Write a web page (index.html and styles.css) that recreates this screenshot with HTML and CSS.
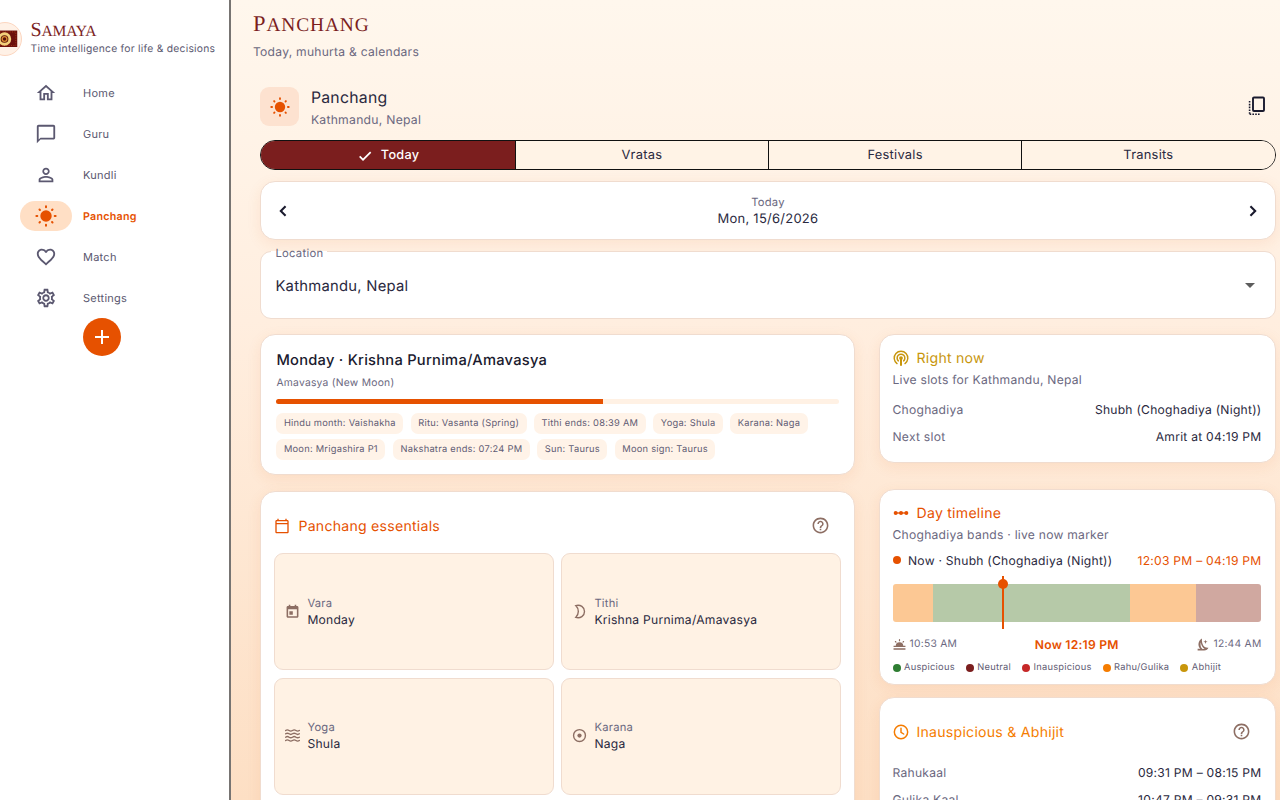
FILE: index.html
```html
<!DOCTYPE html>
<html lang="en">
<head>
  <meta charset="UTF-8">
  <meta name="viewport" content="width=device-width, initial-scale=1.0">
  <title>Samaya - Panchang</title>
  <link rel="stylesheet" href="styles.css">
</head>
<body>
  <div class="app">
    <!-- Sidebar -->
    <aside class="sidebar">
      <div class="brand">
        <div class="brand-logo">
          <svg viewBox="0 0 34 34">
            <rect x="3" y="8" width="27" height="17.500" fill="#6b0f0c"/>
            <rect x="4.500" y="9.500" width="24" height="14.500" fill="none" stroke="#a63a16" stroke-dasharray="1 1.500"/>
            <circle cx="16.500" cy="17" r="5.600" fill="#5a120a" stroke="#f3cf7a" stroke-width="3"/>
            <circle cx="16.500" cy="17" r="2.500" fill="none" stroke="#d98a32" stroke-width="1.400"/>
          </svg>
        </div>
        <div>
          <div class="brand-name">Samaya</div>
          <div class="brand-tagline">Time intelligence for life &amp; decisions</div>
        </div>
      </div>

      <nav class="nav">
        <a class="nav-item">
          <span class="nav-icon"><svg viewBox="0 0 24 24"><path d="M12 5.690l5 4.500V18h-2v-6H9v6H7v-7.810l5-4.500M12 3L2 12h3v8h6v-6h2v6h6v-8h3L12 3z"/></svg></span>
          <span>Home</span>
        </a>
        <a class="nav-item">
          <span class="nav-icon"><svg viewBox="0 0 24 24"><path d="M20 2H4c-1.100 0-2 .9-2 2v18l4-4h14c1.100 0 2-.9 2-2V4c0-1.100-.9-2-2-2zm0 14H6l-2 2V4h16v12z"/></svg></span>
          <span>Guru</span>
        </a>
        <a class="nav-item">
          <span class="nav-icon"><svg viewBox="0 0 24 24"><path d="M12 5.900c1.160 0 2.100.94 2.100 2.100s-.94 2.100-2.100 2.100S9.900 9.160 9.900 8s.94-2.100 2.100-2.100m0 9c2.970 0 6.100 1.460 6.100 2.100v1.100H5.900V17c0-.64 3.130-2.100 6.100-2.100M12 4C9.790 4 8 5.790 8 8s1.790 4 4 4 4-1.790 4-4-1.790-4-4-4zm0 9c-2.670 0-8 1.340-8 4v3h16v-3c0-2.660-5.330-4-8-4z"/></svg></span>
          <span>Kundli</span>
        </a>
        <a class="nav-item active">
          <span class="nav-icon"><svg viewBox="0 0 24 24"><circle cx="12" cy="12" r="6.200"/><path class="line" d="M12 1.500v1M12 21.500v1M1.500 12h1M21.500 12h1M4.900 4.900l.5.5M18.600 18.600l.5.5M4.900 19.100l.5-.5M18.600 5.400l.5-.5"/></svg></span>
          <span>Panchang</span>
        </a>
        <a class="nav-item">
          <span class="nav-icon"><svg viewBox="0 0 24 24"><path d="M16.500 3c-1.740 0-3.410.81-4.500 2.090C10.910 3.810 9.240 3 7.500 3 4.420 3 2 5.420 2 8.500c0 3.780 3.400 6.860 8.550 11.540L12 21.350l1.450-1.320C18.600 15.360 22 12.280 22 8.500 22 5.420 19.580 3 16.500 3zm-4.400 15.550l-.1.1-.1-.1C7.140 14.240 4 11.390 4 8.500 4 6.500 5.500 5 7.500 5c1.540 0 3.040.99 3.570 2.360h1.870C13.460 5.990 14.960 5 16.500 5c2 0 3.500 1.500 3.500 3.500 0 2.890-3.140 5.740-7.900 10.050z"/></svg></span>
          <span>Match</span>
        </a>
        <a class="nav-item">
          <span class="nav-icon"><svg viewBox="0 0 24 24"><path d="M19.430 12.980c.04-.32.07-.64.07-.98s-.03-.66-.07-.98l2.110-1.650c.19-.15.24-.42.12-.64l-2-3.460c-.09-.16-.26-.25-.44-.25-.06 0-.12.01-.17.03l-2.490 1c-.52-.4-1.080-.73-1.690-.98l-.38-2.650C14.460 2.180 14.250 2 14 2h-4c-.25 0-.46.18-.49.42l-.38 2.650c-.61.25-1.170.59-1.690.98l-2.490-1c-.06-.02-.12-.03-.18-.03-.17 0-.34.09-.43.25l-2 3.460c-.13.22-.07.49.12.64l2.110 1.650c-.04.32-.07.65-.07.98s.03.66.07.98l-2.110 1.650c-.19.15-.24.42-.12.64l2 3.460c.09.16.26.25.44.25.06 0 .12-.01.17-.03l2.490-1c.52.4 1.080.73 1.690.98l.38 2.650c.03.24.24.42.49.42h4c.25 0 .46-.18.49-.42l.38-2.650c.61-.25 1.170-.59 1.690-.98l2.490 1c.06.02.12.03.18.03.17 0 .34-.09.43-.25l2-3.460c.12-.22.07-.49-.12-.64l-2.110-1.650zm-1.980-1.710c.04.31.05.52.05.73s-.02.43-.05.73l-.14 1.130.89.7 1.080.84-.7 1.210-1.270-.51-1.040-.42-.9.68c-.43.32-.84.56-1.250.73l-1.060.43-.16 1.130-.2 1.350h-1.400l-.19-1.350-.16-1.130-1.060-.43c-.43-.18-.83-.41-1.230-.71l-.91-.7-1.060.43-1.270.51-.7-1.210 1.080-.84.89-.7-.14-1.130c-.03-.31-.05-.54-.05-.74s.02-.43.05-.73l.14-1.130-.89-.7-1.080-.84.7-1.210 1.270.51 1.040.42.9-.68c.43-.32.84-.56 1.250-.73l1.060-.43.16-1.130.2-1.350h1.390l.19 1.350.16 1.130 1.060.43c.43.18.83.41 1.230.71l.91.7 1.060-.43 1.270-.51.7 1.210-1.070.85-.89.7.14 1.130zM12 8c-2.210 0-4 1.790-4 4s1.790 4 4 4 4-1.790 4-4-1.790-4-4-4zm0 6c-1.100 0-2-.9-2-2s.9-2 2-2 2 .9 2 2-.9 2-2 2z"/></svg></span>
          <span>Settings</span>
        </a>
      </nav>
      <button class="fab"><svg viewBox="0 0 24 24"><path d="M19 13h-6v6h-2v-6H5v-2h6V5h2v6h6v2z"/></svg></button>
    </aside>

    <!-- Main content -->
    <main class="main">
      <h1 class="page-title">Panchang</h1>
      <p class="page-subtitle">Today, muhurta &amp; calendars</p>

      <div class="content">
        <header class="header">
          <div class="header-icon"><svg viewBox="0 0 24 24"><circle cx="12" cy="12" r="6.200"/><path class="line" d="M12 1.500v1M12 21.500v1M1.500 12h1M21.500 12h1M4.900 4.900l.5.5M18.600 18.600l.5.5M4.900 19.100l.5-.5M18.600 5.400l.5-.5"/></svg></div>
          <div class="header-text">
            <div class="header-title">Panchang</div>
            <div class="header-place">Kathmandu, Nepal</div>
          </div>
          <svg class="copy-icon" viewBox="0 0 18 20"><rect x="5" y="1.500" width="11" height="13.500" rx="1" fill="none" stroke="#1a1a2e" stroke-width="1.900"/><path d="M1.600 5v14M1.600 18.300h11" fill="none" stroke="#1a1a2e" stroke-width="1.600" stroke-dasharray="1.600 1.200"/></svg>
        </header>

        <div class="tabs">
          <div class="tab selected"><svg viewBox="0 0 24 24"><path d="M9 15.800L4.900 11.700l-1.800 1.800L9 19.400 21.400 7l-1.800-1.800z"/></svg>Today</div>
          <div class="tab">Vratas</div>
          <div class="tab">Festivals</div>
          <div class="tab">Transits</div>
        </div>

        <div class="card date-card">
          <svg viewBox="0 0 24 24"><path d="M15.600 7.600L14 6l-6 6 6 6 1.600-1.600L11.200 12z"/></svg>
          <div class="date-text">
            <div class="date-label">Today</div>
            <div class="date-value">Mon, 15/6/2026</div>
          </div>
          <svg viewBox="0 0 24 24"><path d="M8.400 16.400L10 18l6-6-6-6-1.600 1.600L12.800 12z"/></svg>
        </div>

        <div class="location">
          <span class="location-label">Location</span>
          <span>Kathmandu, Nepal</span>
          <span class="caret"></span>
        </div>

        <div class="columns">
          <div class="column">
            <section class="card summary">
              <h2 class="summary-title">Monday · Krishna Purnima/Amavasya</h2>
              <div class="summary-sub">Amavasya (New Moon)</div>
              <div class="progress"><div class="progress-fill" style="width: 58.1%"></div></div>
              <div class="chips">
                <span class="chip">Hindu month: Vaishakha</span>
                <span class="chip">Ritu: Vasanta (Spring)</span>
                <span class="chip">Tithi ends: 08:39 AM</span>
                <span class="chip">Yoga: Shula</span>
                <span class="chip">Karana: Naga</span>
                <span class="chip">Moon: Mrigashira P1</span>
                <span class="chip">Nakshatra ends: 07:24 PM</span>
                <span class="chip">Sun: Taurus</span>
                <span class="chip">Moon sign: Taurus</span>
              </div>
            </section>

            <section class="card essentials">
              <div class="section-head orange">
                <svg viewBox="0 0 24 24"><path d="M20 3h-1V1h-2v2H7V1H5v2H4c-1.100 0-2 .9-2 2v16c0 1.100.9 2 2 2h16c1.100 0 2-.9 2-2V5c0-1.100-.9-2-2-2zm0 18H4V9.500h16V21zm0-13.500H4V5h16v2.500z"/></svg>
                <h3>Panchang essentials</h3>
                <svg class="help" viewBox="0 0 24 24"><path d="M11 18h2v-2h-2v2zm1-16C6.480 2 2 6.480 2 12s4.480 10 10 10 10-4.480 10-10S17.520 2 12 2zm0 18c-4.410 0-8-3.590-8-8s3.590-8 8-8 8 3.590 8 8-3.590 8-8 8zm0-14c-2.210 0-4 1.790-4 4h2c0-1.100.9-2 2-2s2 .9 2 2c0 2-3 1.750-3 5h2c0-2.250 3-2.500 3-5 0-2.210-1.790-4-4-4z"/></svg>
              </div>
              <div class="tiles">
                <div class="tile">
                  <svg viewBox="0 0 24 24"><path d="M19 3h-1V1h-2.500v2h-7V1H6v2H5c-1.100 0-2.500.9-2.500 2v15c0 1.100 1.400 2 2.500 2h14c1.100 0 2.500-.9 2.500-2V5c0-1.100-1.400-2-2.500-2zm0 16.500H5V8.500h14v11zM7 11.500h5.500V17H7z"/></svg>
                  <div><div class="tile-label">Vara</div><div class="tile-value">Monday</div></div>
                </div>
                <div class="tile">
                  <svg viewBox="0 0 24 24"><path class="line" d="M6 2.500C13.500.5 20 5 20 12s-6.500 11.500-14 9.500c5.500-5.500 5.500-13.500 0-19z"/></svg>
                  <div><div class="tile-label">Tithi</div><div class="tile-value">Krishna Purnima/Amavasya</div></div>
                </div>
                <div class="tile">
                  <svg viewBox="0 0 24 24"><path class="line" d="M1 4q2.750-2 5.500 0t5.500 0 5.500 0 5.500 0M1 9.300q2.750-2 5.500 0t5.500 0 5.500 0 5.500 0M1 14.700q2.750-2 5.500 0t5.500 0 5.500 0 5.500 0M1 20q2.750-2 5.500 0t5.500 0 5.500 0 5.500 0"/></svg>
                  <div><div class="tile-label">Yoga</div><div class="tile-value">Shula</div></div>
                </div>
                <div class="tile">
                  <svg viewBox="0 0 24 24"><circle class="line" cx="12" cy="12" r="9.500"/><circle cx="12" cy="12" r="3.400"/></svg>
                  <div><div class="tile-label">Karana</div><div class="tile-value">Naga</div></div>
                </div>
              </div>
            </section>
          </div>

          <div class="column">
            <section class="card now-card">
              <div class="section-head gold">
                <svg viewBox="0 0 24 24"><circle cx="12" cy="12" r="2.800"/><path d="M10.500 13h3v10.500h-3z"/><path class="line" d="M8 16.300a5.800 5.800 0 1 1 8 0M6 20.300a10.200 10.200 0 1 1 12 0"/></svg>
                <h3>Right now</h3>
              </div>
              <div class="section-sub">Live slots for Kathmandu, Nepal</div>
              <div class="rows">
                <div class="row"><span>Choghadiya</span><b>Shubh (Choghadiya (Night))</b></div>
                <div class="row"><span>Next slot</span><b>Amrit at 04:19 PM</b></div>
              </div>
            </section>

            <section class="card timeline-card">
              <div class="section-head orange">
                <svg viewBox="0 0 24 24"><circle cx="4" cy="12" r="3"/><circle cx="12" cy="12" r="3"/><circle cx="20" cy="12" r="3"/><path d="M3 11h18v2H3z"/></svg>
                <h3>Day timeline</h3>
              </div>
              <div class="section-sub">Choghadiya bands · live now marker</div>
              <div class="current">
                <i class="dot now"></i>
                <span>Now · Shubh (Choghadiya (Night))</span>
                <span class="current-time">12:03 PM – 04:19 PM</span>
              </div>
              <div class="bands">
                <div class="band rahu" style="width: 11.1%"></div>
                <div class="band good" style="width: 35.500%"></div>
                <div class="band good" style="width: 17.800%"></div>
                <div class="band rahu" style="width: 17.800%"></div>
                <div class="band neutral" style="width: 17.800%"></div>
                <div class="marker" style="left: 30%"></div>
              </div>
              <div class="times">
                <svg viewBox="0 0 24 24"><path d="M5 15a7 7 0 0 1 14 0zM1 14.500h22v2H1zM1 19h22v2.500H1z"/><path class="line" d="M12 3v2M4.500 6.500l1 1M19.500 6.500l-1 1"/></svg>
                <span>10:53 AM</span>
                <strong>Now 12:19 PM</strong>
                <svg viewBox="0 0 24 24"><path d="M11 1C3 6 3 15 8 20H3v3h12c4 0 7-2 8-5-7 1-13-5-12-17z"/><path d="M17.500 3l1 3 3 1-3 1-1 3-1-3-3-1 3-1z"/><path d="M9 8c0 5 3 10 7 12l-4 .5C8.500 18 7.500 12 9 8z" fill="#fff"/></svg>
                <span>12:44 AM</span>
              </div>
              <div class="legend">
                <span><i class="dot auspicious"></i>Auspicious</span>
                <span><i class="dot maroon"></i>Neutral</span>
                <span><i class="dot red"></i>Inauspicious</span>
                <span><i class="dot amber"></i>Rahu/Gulika</span>
                <span><i class="dot abhijit"></i>Abhijit</span>
              </div>
            </section>

            <section class="card inauspicious">
              <div class="section-head amber-text">
                <svg viewBox="0 0 24 24"><circle class="line" cx="12" cy="12" r="10"/><path class="line" d="M12 6.500v6l4 2.500"/></svg>
                <h3>Inauspicious &amp; Abhijit</h3>
                <svg class="help" viewBox="0 0 24 24"><path d="M11 18h2v-2h-2v2zm1-16C6.480 2 2 6.480 2 12s4.480 10 10 10 10-4.480 10-10S17.520 2 12 2zm0 18c-4.410 0-8-3.590-8-8s3.590-8 8-8 8 3.590 8 8-3.590 8-8 8zm0-14c-2.210 0-4 1.790-4 4h2c0-1.100.9-2 2-2s2 .9 2 2c0 2-3 1.750-3 5h2c0-2.250 3-2.500 3-5 0-2.210-1.790-4-4-4z"/></svg>
              </div>
              <div class="rows">
                <div class="row"><span>Rahukaal</span><b>09:31 PM – 08:15 PM</b></div>
                <div class="row"><span>Gulika Kaal</span><b>10:47 PM – 09:31 PM</b></div>
              </div>
            </section>
          </div>
        </div>
      </div>
    </main>
  </div>
</body>
</html>
```
FILE: styles.css
```css
* {
  box-sizing: border-box;
}

body {
  margin: 0;
  font-family: Inter, "Liberation Sans", sans-serif;
  font-size: 13px;
  letter-spacing: 0.25px;
  text-rendering: geometricPrecision;
  color: #2a2940;
}

h1, h2, h3, p {
  margin: 0;
  font-weight: 400;
}

svg {
  display: block;
  flex: none;
  fill: currentColor;
}

/* Stroked icon parts */
.line {
  fill: none;
  stroke: currentColor;
  stroke-width: 2.2;
  stroke-linecap: round;
}

.app {
  display: flex;
  height: 800px;
  overflow: hidden;
}

/* Sidebar */
.sidebar {
  width: 231px;
  flex: none;
  border-right: 2px solid #777472;
  background: #fff;
  overflow: hidden;
  color: #5b5870;
}

.brand {
  display: flex;
  height: 72px;
  padding-top: 20px;
  white-space: nowrap;
}

.brand-logo {
  width: 34px;
  height: 34px;
  margin: 2px 8.5px 0 -12px;
  border: 1px solid #fcd6c0;
  border-radius: 50%;
  background: #fff1e6;
  overflow: hidden;
}

.brand-name {
  height: 20px;
  font-family: "Liberation Serif", serif;
  font-size: 15.6px;
  line-height: 20px;
  letter-spacing: -0.2px;
  text-transform: uppercase;
  color: #7b1e1e;
}

.brand-name::first-letter {
  font-size: 20px;
}

.brand-tagline {
  font-size: 10.3px;
  line-height: 18px;
}

.nav-item {
  display: flex;
  align-items: center;
  height: 41px;
  padding-left: 20px;
  gap: 11px;
  font-size: 11px;
}

.nav-icon {
  display: flex;
  align-items: center;
  justify-content: center;
  width: 52px;
  height: 30px;
  border-radius: 15px;
}

.nav-icon svg {
  width: 22px;
  height: 22px;
}

.nav-item.active {
  color: #e65100;
  font-size: 10.7px;
  font-weight: 600;
}

.nav-item.active .nav-icon {
  background: #ffdfc5;
}

.nav-item > span:last-child {
  padding-top: 1px;
}

.fab {
  display: flex;
  align-items: center;
  justify-content: center;
  width: 38px;
  height: 38px;
  margin-left: 83px;
  padding: 0;
  border: 0;
  border-radius: 50%;
  background: #e65100;
  color: #fff;
}

.fab svg {
  width: 24px;
  height: 24px;
}

/* Main area */
.main {
  flex: 1;
  min-width: 0;
  padding: 12px 4.5px 0 22px;
  background: linear-gradient(180deg, #fff7ed 0%, #ffeedf 40%, #fddfc4 100%);
}

.page-title {
  height: 25px;
  font-family: "Liberation Serif", serif;
  font-size: 19.4px;
  line-height: 24px;
  letter-spacing: 0.9px;
  text-transform: uppercase;
  color: #7b1e1e;
}

.page-title::first-letter {
  font-size: 22.5px;
}

.page-subtitle {
  margin-top: 5px;
  font-size: 12.1px;
  line-height: 20px;
  color: #6b6880;
}

.content {
  padding: 25px 0 0 7.4px;
}

.header {
  display: flex;
  align-items: center;
  height: 39px;
  padding-right: 10px;
}

.header-icon {
  display: flex;
  align-items: center;
  justify-content: center;
  width: 39px;
  height: 39px;
  margin-right: 11.5px;
  border-radius: 9px;
  background: #fde2d0;
  color: #e65100;
}

.header-icon svg {
  width: 20px;
  height: 20px;
}

.header-text {
  flex: 1;
  padding-top: 4px;
}

.header-title {
  font-size: 15.8px;
  line-height: 22px;
}

.header-place {
  font-size: 12.2px;
  line-height: 21px;
  color: #6b6880;
}

.copy-icon {
  width: 18px;
  height: 20px;
  margin-bottom: 2px;
}

.tabs {
  display: grid;
  grid-template-columns: repeat(4, 1fr);
  height: 30px;
  margin-top: 14px;
  border: 1px solid #111;
  border-radius: 15px;
  overflow: hidden;
}

.tab {
  display: flex;
  align-items: center;
  justify-content: center;
  gap: 8px;
  padding-top: 1px;
  border-left: 1px solid #111;
  background: #fff3e6;
  font-size: 12.9px;
}

.tab svg {
  width: 16px;
  height: 16px;
}

.tab.selected {
  border-left: 0;
  background: #7b1e1e;
  color: #fff;
  font-size: 12.7px;
  font-weight: 500;
}

/* Cards */
.card {
  border: 1px solid #f0dccf;
  border-radius: 15px;
  background: #fff;
  box-shadow: 0 4px 14px rgba(230, 110, 40, 0.1);
}

.date-card {
  display: flex;
  align-items: center;
  height: 59px;
  margin-top: 11px;
  padding: 0 11px;
}

.date-card svg {
  width: 22px;
  height: 22px;
  color: #1a1a2e;
}

.date-text {
  flex: 1;
  text-align: center;
}

.date-label {
  font-size: 11.2px;
  line-height: 16px;
  color: #6b6880;
}

.date-value {
  font-size: 13px;
  line-height: 18px;
}

.location {
  position: relative;
  display: flex;
  align-items: center;
  justify-content: space-between;
  height: 68px;
  margin-top: 11px;
  padding: 1px 20px 0 14px;
  border: 1px solid #f0dccf;
  border-radius: 11px;
  background: #fff;
  font-size: 14.8px;
}

/* Floating label sits over the field's top border */
.location-label {
  position: absolute;
  top: -6px;
  left: 10px;
  padding: 0 4px;
  background: linear-gradient(transparent 5px, #fff 5px);
  font-size: 11.3px;
  line-height: 15px;
  color: #6b6880;
}

.caret {
  border: 5px solid transparent;
  border-top-color: #5c5c5c;
  border-bottom: 0;
}

.columns {
  display: grid;
  grid-template-columns: 595px 397px;
  justify-content: space-between;
  align-items: start;
  margin-top: 15px;
}

/* Day summary */
.summary {
  height: 141px;
  padding: 14px 15px;
}

.summary-title {
  font-size: 14.7px;
  line-height: 23px;
  font-weight: 500;
  color: #1a1a2e;
}

.summary-sub {
  padding-top: 1px;
  font-size: 10.3px;
  line-height: 21px;
  color: #6b6880;
}

.progress {
  height: 5px;
  margin-top: 5px;
  border-radius: 3px;
  background: #fff1e4;
  overflow: hidden;
}

.progress-fill {
  height: 100%;
  background: #e65100;
}

.chips {
  display: flex;
  flex-wrap: wrap;
  gap: 5.3px 7.5px;
  margin-top: 9px;
}

.chip {
  height: 21px;
  padding: 0 7.5px;
  border-radius: 7px;
  background: #fff3e8;
  font-size: 9.3px;
  line-height: 22px;
  color: #5f5c74;
}

/* Section headings */
.section-head {
  display: flex;
  align-items: center;
  gap: 8px;
  height: 21px;
}

.section-head svg {
  width: 16px;
  height: 16px;
}

.section-head h3 {
  flex: 1;
  padding-top: 1px;
  font-size: 14.1px;
}

.section-head .help {
  width: 19px;
  height: 19px;
  color: #8d6e63;
}

.orange {
  color: #e65100;
}

.gold {
  color: #c8960c;
}

.amber-text {
  color: #f57c00;
}

.section-sub {
  font-size: 12.1px;
  line-height: 22px;
  color: #6b6880;
}

.essentials {
  height: 460px;
  margin-top: 16px;
  padding: 23px 13px;
}

.essentials .section-head {
  padding-right: 11px;
}

.tiles {
  display: grid;
  grid-template-columns: 1fr 1fr;
  gap: 7.5px 7px;
  margin-top: 17px;
}

.tile {
  display: flex;
  align-items: center;
  gap: 7.5px;
  height: 117px;
  padding: 0 9.5px 1px;
  border: 1px solid #f0dccf;
  border-radius: 9px;
  background: #fff2e4;
}

.tile svg {
  width: 15px;
  height: 15px;
  color: #8d6e63;
}

.tile-label {
  font-size: 11.2px;
  line-height: 16px;
  color: #6b6880;
}

.tile-value {
  font-size: 12.1px;
  line-height: 17px;
}

/* Right column */
.now-card {
  height: 129px;
  padding: 12px 13px;
}

.now-card .section-sub {
  line-height: 24px;
}

.rows {
  margin-top: 4px;
}

.row {
  display: flex;
  justify-content: space-between;
  font-size: 12.1px;
  line-height: 27px;
  color: #6b6880;
}

.row b {
  font-weight: 400;
  color: #2a2940;
}

.timeline-card {
  height: 196px;
  margin-top: 26px;
  padding: 12px 13px;
}

.timeline-card .section-sub {
  line-height: 23px;
}

.current {
  display: flex;
  align-items: center;
  height: 28px;
  font-size: 12.1px;
}

.current-time {
  margin-left: auto;
  color: #e65100;
}

.dot {
  display: inline-block;
  width: 8px;
  height: 8px;
  margin-right: 3.5px;
  border-radius: 50%;
}

.dot.now { margin-right: 7.5px; background: #e65100; }
.dot.auspicious { background: #2e7d32; }
.dot.maroon { background: #7b1e1e; }
.dot.red { background: #c62828; }
.dot.amber { background: #f57c00; }
.dot.abhijit { background: #c8960c; }

.bands {
  position: relative;
  display: flex;
  height: 38px;
  margin-top: 10px;
}

.band.rahu { background: #fcc894; }
.band.good { background: #b6c9a8; }
.band.neutral { background: #d0a8a0; }

.band:first-child {
  border-radius: 3px 0 0 3px;
}

.band:nth-child(5) {
  border-radius: 0 3px 3px 0;
}

/* Current time marker over the bands */
.marker {
  position: absolute;
  top: -8px;
  width: 2px;
  height: 53px;
  margin-left: -1px;
  background: #e65100;
}

.marker::before {
  content: "";
  position: absolute;
  top: 3px;
  left: -4px;
  width: 10px;
  height: 10px;
  border-radius: 50%;
  background: #e65100;
}

.times {
  display: flex;
  align-items: center;
  gap: 4px;
  height: 20px;
  margin-top: 12px;
  font-size: 10.3px;
  color: #6b6880;
}

.times svg {
  width: 13px;
  height: 13px;
  color: #8d6e63;
}

.times strong {
  margin: 0 auto;
  font-size: 12.1px;
  font-weight: 600;
  color: #e65100;
}

.legend {
  display: flex;
  gap: 11px;
  margin-top: 5px;
  font-size: 9.3px;
  line-height: 17px;
  color: #5f5c74;
}

.legend span {
  display: flex;
  align-items: center;
}

.inauspicious {
  height: 200px;
  margin-top: 12px;
  padding: 23px 13px;
}

.inauspicious .section-head {
  padding-right: 11px;
}

.inauspicious .rows {
  margin-top: 17px;
}
```
